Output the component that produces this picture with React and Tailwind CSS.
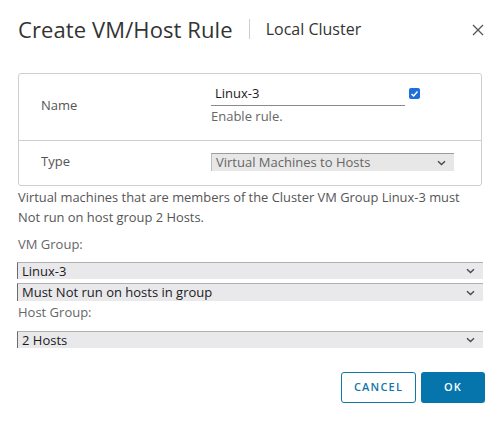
const font = { fontFamily: '"Open Sans", "Liberation Sans", sans-serif' }

function Chevron() {
  return (
    <svg width="9" height="6" viewBox="0 0 9 6" className="shrink-0">
      <path d="M1 1.2 L4.5 4.6 L8 1.2" fill="none" stroke="#4a4a4a" strokeWidth="1.4" />
    </svg>
  )
}

function SelectBox({ value, className = '' }) {
  return (
    <div className={`flex items-center justify-between bg-[#e9e9ec] border-t border-t-[#b0b0b0] border-l border-l-[#6b6b6b] pl-[4px] pr-[8px] text-[13px] text-[#1b1b1b] leading-none ${className}`}>
      <span>{value}</span>
      <Chevron />
    </div>
  )
}

export default function App() {
  return (
    <div style={font} className="w-[504px] h-[424px] bg-white flex flex-col">
      {/* header */}
      <div className="flex items-center h-[58px] pl-[18px] pr-[20px]">
        <span className="text-[22px] tracking-[0.1px] text-[#333]">Create VM/Host Rule</span>
        <span className="w-px h-[20px] bg-[#ccc] ml-[16px] mr-[16px]" />
        <span className="text-[16px] text-[#333]">Local Cluster</span>
        <button className="ml-auto text-[#555] mt-[2px]">
          <svg width="12" height="12" viewBox="0 0 12 12">
            <path d="M1 1 L11 11 M11 1 L1 11" stroke="#555" strokeWidth="1.3" />
          </svg>
        </button>
      </div>

      {/* form box */}
      <div className="mx-[18px] mt-[15px] w-[464px] border-[1.5px] border-[#cfcfcf] rounded-[3px]">
        <div className="flex h-[67px] border-b-[1.5px] border-[#cfcfcf]">
          <div className="w-[192px] pl-[22px] pt-[22px] text-[13px] text-[#555]">Name</div>
          <div className="pt-[10px]">
            <div className="flex items-start">
              <div className="w-[194px] border-b border-[#8a8a8a] pl-[4px] pb-[1px] text-[13px] text-[#1b1b1b]">Linux-3</div>
              <div className="ml-[4px] mt-[4px] w-[11px] h-[11px] rounded-[2px] bg-[#1e6fd9] flex items-center justify-center">
                <svg width="9" height="8" viewBox="0 0 9 8">
                  <path d="M1.5 4 L3.6 6 L7.5 1.5" fill="none" stroke="white" strokeWidth="1.5" />
                </svg>
              </div>
            </div>
            <div className="text-[13px] text-[#666] mt-[1px]">Enable rule.</div>
          </div>
        </div>
        <div className="flex h-[44px]">
          <div className="w-[192px] pl-[22px] pt-[11px] text-[13px] text-[#555]">Type</div>
          <div className="pt-[12px]">
            <div className="w-[243px] h-[18px] flex items-center justify-between bg-[#e7e7e7] border-t border-t-[#9c9c9c] border-l border-l-[#bdbdbd] pl-[4px] pr-[8px] text-[13px] text-[#666] leading-none">
              <span>Virtual Machines to Hosts</span>
              <Chevron />
            </div>
          </div>
        </div>
      </div>

      {/* description */}
      <div className="px-[18px] mt-[1px] text-[12.9px] leading-[20px] text-[#555]">
        <p>Virtual machines that are members of the Cluster VM Group Linux-3 must</p>
        <p>Not run on host group 2 Hosts.</p>
      </div>

      <div className="px-[18px] mt-[7px] text-[13px] leading-[20px] text-[#666]">VM Group:</div>

      <div className="pl-[17px] w-[483px] mt-[8px] flex flex-col gap-[4px]">
        <SelectBox value="Linux-3" className="h-[17px]" />
        <SelectBox value="Must Not run on hosts in group" className="h-[18px]" />
      </div>

      <div className="px-[18px] mt-[1px] text-[13px] leading-[20px] text-[#666]">Host Group:</div>

      <div className="pl-[17px] w-[483px] mt-[9px]">
        <SelectBox value="2 Hosts" className="h-[17px]" />
      </div>

      {/* footer */}
      <div className="flex justify-end gap-[5px] pr-[19px] mt-[24px]">
        <button className="w-[75px] h-[31px] border border-[#0f77a8] rounded-[3px] text-[11px] font-semibold tracking-[1.2px] text-[#0f77a8] bg-white">
          CANCEL
        </button>
        <button className="w-[64px] h-[31px] rounded-[3px] text-[11px] font-semibold tracking-[1.2px] text-white bg-[#0575ab]">
          OK
        </button>
      </div>
    </div>
  )
}
